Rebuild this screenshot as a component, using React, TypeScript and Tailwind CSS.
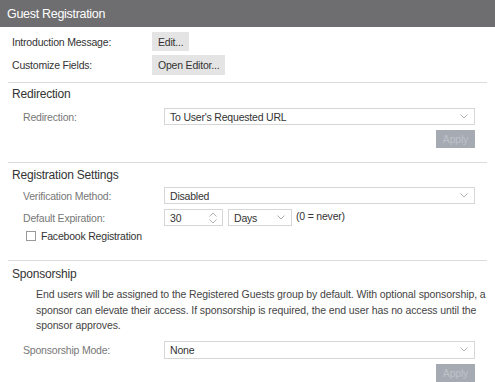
import React from 'react';

function Chevron({ className = '' }: { className?: string }) {
  return (
    <svg width="8" height="5" viewBox="0 0 8 5" className={className}>
      <path d="M0.5 0.5 L4 4 L7.5 0.5" fill="none" stroke="#b0b0b0" strokeWidth="1" />
    </svg>
  );
}

function Select({ value, className = '' }: { value: string; className?: string }) {
  return (
    <div
      className={`flex items-center justify-between border border-[#d6d6d6] bg-white pl-[5px] pr-[6px] text-[#333] ${className}`}
    >
      <span>{value}</span>
      <Chevron />
    </div>
  );
}

function Divider() {
  return <div className="mx-[8px] border-t border-[#dcdcdc]" />;
}

function ApplyButton() {
  return (
    <div className="flex justify-end pr-[20px]">
      <div className="flex h-[18px] w-[39px] items-center justify-center bg-[#a6aab2] text-[#bfc3c9]">
        Apply
      </div>
    </div>
  );
}

function FieldRow({ label, children }: { label: string; children: React.ReactNode }) {
  return (
    <div className="flex items-center pl-[23px]">
      <div className="w-[141px] text-[#777]">{label}</div>
      {children}
    </div>
  );
}

export default function App() {
  return (
    <div className="h-[382px] w-[495px] overflow-hidden bg-white font-['Liberation_Sans',Arial,sans-serif] text-[10.5px] leading-[14px] tracking-[-0.2px] text-[#333]">
      <div className="flex h-[27px] items-center bg-[#6e6e70] pl-[7px] text-[12.5px] tracking-[-0.3px] text-white">
        Guest Registration
      </div>

      <div className="flex flex-col gap-[4px] pl-[12px] pt-[5px]">
        <div className="flex items-center">
          <div className="w-[140px]">Introduction Message:</div>
          <div className="flex h-[19px] items-center bg-[#e4e4e4] px-[6px]">Edit...</div>
        </div>
        <div className="flex items-center">
          <div className="w-[140px]">Customize Fields:</div>
          <div className="flex h-[20px] items-center bg-[#e4e4e4] px-[6px]">Open Editor...</div>
        </div>
      </div>

      <div className="mt-[7px]">
        <Divider />
      </div>

      <div className="mt-[3px] pl-[12px] text-[12px] leading-[16px]">Redirection</div>
      <div className="mt-[6px]">
        <FieldRow label="Redirection:">
          <Select value="To User's Requested URL" className="h-[17px] w-[311px]" />
        </FieldRow>
      </div>
      <div className="mt-[5px]">
        <ApplyButton />
      </div>

      <div className="mt-[14px]">
        <Divider />
      </div>

      <div className="mt-[4px] pl-[12px] text-[12px] leading-[16px]">Registration Settings</div>
      <div className="mt-[4px]">
        <FieldRow label="Verification Method:">
          <Select value="Disabled" className="h-[17px] w-[311px]" />
        </FieldRow>
      </div>
      <div className="mt-[5px]">
        <FieldRow label="Default Expiration:">
          <div className="flex h-[17px] w-[59px] items-center justify-between border border-[#d6d6d6] pl-[5px] pr-[5px]">
            <span>30</span>
            <div className="flex flex-col gap-[2px]">
              <svg width="8" height="5" viewBox="0 0 8 5">
                <path d="M0.5 4.5 L4 1 L7.5 4.5" fill="none" stroke="#b0b0b0" strokeWidth="1" />
              </svg>
              <Chevron />
            </div>
          </div>
          <Select value="Days" className="ml-[5px] h-[17px] w-[64px]" />
          <span className="ml-[4px] -mt-[3px]">(0 = never)</span>
        </FieldRow>
      </div>
      <div className="mt-[3px] flex items-center pl-[26px]">
        <div className="h-[10px] w-[10px] border border-[#9a9a9a] bg-white" />
        <span className="ml-[5px]">Facebook Registration</span>
      </div>

      <div className="mt-[17px]">
        <Divider />
      </div>

      <div className="mt-[5px] pl-[12px] text-[12px] leading-[16px]">Sponsorship</div>
      <p className="mt-[5px] pl-[36px] pr-[4px] leading-[15.5px] tracking-[-0.1px] text-[#444]">
        End users will be assigned to the Registered Guests group by default. With optional sponsorship, a
        sponsor can elevate their access. If sponsorship is required, the end user has no access until the
        sponsor approves.
      </p>
      <div className="mt-[7px]">
        <FieldRow label="Sponsorship Mode:">
          <Select value="None" className="h-[18px] w-[311px]" />
        </FieldRow>
      </div>
      <div className="mt-[5px]">
        <ApplyButton />
      </div>
    </div>
  );
}
